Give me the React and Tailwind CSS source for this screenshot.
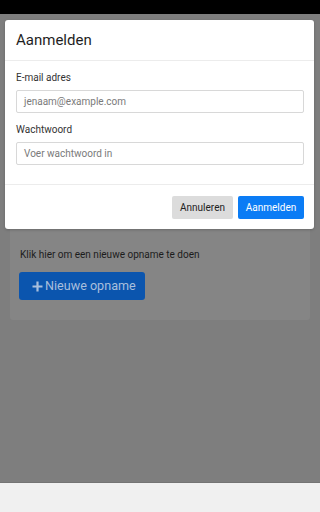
export default function App() {
  const font = { fontFamily: 'Roboto, "Noto Sans", sans-serif' };
  return (
    <div className="relative w-full h-[512px] flex flex-col overflow-hidden" style={font}>
      <div className="h-[14px] bg-black shrink-0" />
      <div className="flex-1 bg-[#7e7e7e] px-[10px] pt-[180px]">
        <div className="bg-[#858585] rounded-[3px] px-[10px] pt-[55px] pb-[20px]">
          <div className="text-[10px] leading-[12px] text-[#1c1c1c]">Klik hier om een nieuwe opname te doen</div>
          <div className="mt-[11px] flex">
            <div className="h-[28px] w-[126px] -ml-[1px] rounded-[3px] bg-[#0b55ae] flex items-center pl-[13px] gap-[2px] text-[#a9bfdc] text-[12.6px] whitespace-nowrap">
              <svg width="11" height="11" viewBox="0 0 11 11">
                <path d="M5.5 0.5v10M0.5 5.5h10" stroke="#a9bfdc" strokeWidth="2.2" />
              </svg>
              <span>Nieuwe opname</span>
            </div>
          </div>
        </div>
      </div>
      <div className="h-[1px] bg-[#747474] shrink-0" />
      <div className="h-[29px] bg-[#f0f0f0] shrink-0" />

      <div className="absolute top-[20px] left-[5px] right-[6px] bg-white rounded-[3px] shadow-[0_1px_3px_rgba(0,0,0,0.2)]">
        <div className="h-[41px] pl-[11px] flex items-center border-b border-[#ececec]">
          <span className="text-[15px] text-[#1e1e1e]">Aanmelden</span>
        </div>
        <div className="pl-[11px] pr-[10px] pt-[10px] pb-[19px]">
          <div className="text-[10px] leading-[13px] text-[#333]">E-mail adres</div>
          <div className="mt-[6px] h-[23px] border border-[#d8d8d8] rounded-[2px] flex items-center pl-[7px] text-[10px] text-[#7a7a7a]">jenaam@example.com</div>
          <div className="mt-[10px] text-[10px] leading-[13px] text-[#333]">Wachtwoord</div>
          <div className="mt-[6px] h-[23px] border border-[#d8d8d8] rounded-[2px] flex items-center pl-[7px] text-[10px] text-[#7a7a7a]">Voer wachtwoord in</div>
        </div>
        <div className="border-t border-[#ececec] flex justify-end gap-[5px] pr-[10px] pt-[11px] pb-[10px]">
          <div className="h-[23px] w-[61px] rounded-[2px] bg-[#dcdcdc] flex items-center justify-center text-[10px] text-[#222]">Annuleren</div>
          <div className="h-[23px] w-[66px] rounded-[2px] bg-[#0b7cf5] flex items-center justify-center text-[10px] text-white">Aanmelden</div>
        </div>
      </div>
    </div>
  );
}
